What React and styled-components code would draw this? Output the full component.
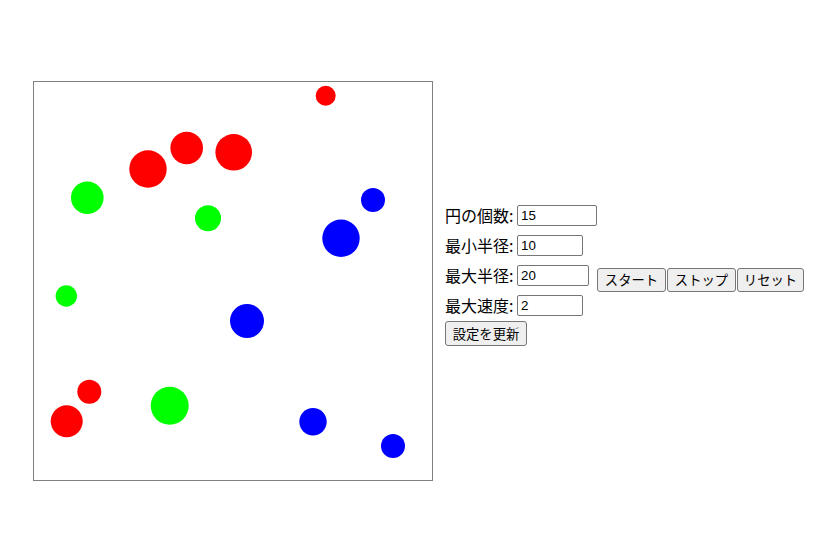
import React from 'react';
import styled, { createGlobalStyle } from 'styled-components';

const GlobalStyle = createGlobalStyle`
  html, body {
    margin: 0;
    background: #fff;
  }
  body {
    font-family: "Noto Sans CJK JP", "Noto Sans", sans-serif;
    color: #000;
  }
`;

const Page = styled.div`
  display: flex;
  align-items: flex-start;
  padding: 81px 0 0 33px;
`;

const Board = styled.div`
  width: 400px;
  height: 400px;
  box-sizing: border-box;
  border: 1px solid #808080;
  background: #fff;
  flex-shrink: 0;

  svg {
    display: block;
  }
`;

const Controls = styled.div`
  display: flex;
  flex-direction: column;
  margin: 119px 0 0 12px;
`;

const Row = styled.div`
  display: flex;
  align-items: center;
  height: 30px;
`;

const Label = styled.label`
  width: 72px;
  font-size: 16px;
  line-height: 20px;
  white-space: nowrap;
`;

const NumInput = styled.input`
  box-sizing: border-box;
  width: ${p => p.$w}px;
  height: 21px;
  padding: 1px 3px;
  border: 1px solid #767676;
  border-radius: 2px;
  font-family: "Liberation Sans", Arial, sans-serif;
  font-size: 13.33px;
  color: #000;
  background: #fff;
  outline: none;
`;

const ButtonGroup = styled.div`
  display: flex;
  gap: 1px;
  align-self: flex-start;
  margin: 8px 0 0 8px;
`;

const Button = styled.button`
  box-sizing: border-box;
  display: inline-flex;
  align-items: center;
  justify-content: center;
  width: ${p => p.$w}px;
  height: ${p => p.$h || 24}px;
  padding: 0;
  border: 1px solid #767676;
  border-radius: 3px;
  background: #efefef;
  color: #000;
  font-family: "Noto Sans CJK JP", sans-serif;
  font-size: 13.33px;
  line-height: 1;
  white-space: nowrap;
  cursor: pointer;
`;

const UpdateRow = styled.div`
  display: flex;
  padding-top: 1px;
`;

const circles = [
  { x: 291.7, y: 13.7, r: 10, c: '#ff0000' },
  { x: 152.7, y: 66, r: 16.3, c: '#ff0000' },
  { x: 199.7, y: 70.3, r: 18.3, c: '#ff0000' },
  { x: 114, y: 87, r: 18.7, c: '#ff0000' },
  { x: 53.3, y: 115.7, r: 16.3, c: '#00ff00' },
  { x: 174, y: 136.3, r: 13, c: '#00ff00' },
  { x: 339, y: 118, r: 12, c: '#0000ff' },
  { x: 307, y: 156.3, r: 18.7, c: '#0000ff' },
  { x: 32.3, y: 214, r: 10.7, c: '#00ff00' },
  { x: 213, y: 239, r: 17, c: '#0000ff' },
  { x: 55.3, y: 309.7, r: 12, c: '#ff0000' },
  { x: 32.7, y: 339.3, r: 16, c: '#ff0000' },
  { x: 135.7, y: 323.7, r: 19, c: '#00ff00' },
  { x: 279, y: 339.7, r: 13.7, c: '#0000ff' },
  { x: 359, y: 364, r: 12, c: '#0000ff' },
];

const settings = [
  { label: '円の個数:', value: '15', w: 80 },
  { label: '最小半径:', value: '10', w: 66 },
  { label: '最大半径:', value: '20', w: 72, buttons: true },
  { label: '最大速度:', value: '2', w: 66 },
];

export default function App() {
  return (
    <>
      <GlobalStyle />
      <Page>
        <Board>
          <svg width="398" height="398" viewBox="0 0 398 398">
            {circles.map((c, i) => (
              <circle key={i} cx={c.x} cy={c.y} r={c.r} fill={c.c} />
            ))}
          </svg>
        </Board>
        <Controls>
          {settings.map(s => (
            <Row key={s.label}>
              <Label>{s.label}</Label>
              <NumInput type="text" defaultValue={s.value} $w={s.w} />
              {s.buttons && (
                <ButtonGroup>
                  <Button $w={69}>スタート</Button>
                  <Button $w={69}>ストップ</Button>
                  <Button $w={67}>リセット</Button>
                </ButtonGroup>
              )}
            </Row>
          ))}
          <UpdateRow>
            <Button $w={82} $h={25}>設定を更新</Button>
          </UpdateRow>
        </Controls>
      </Page>
    </>
  );
}
